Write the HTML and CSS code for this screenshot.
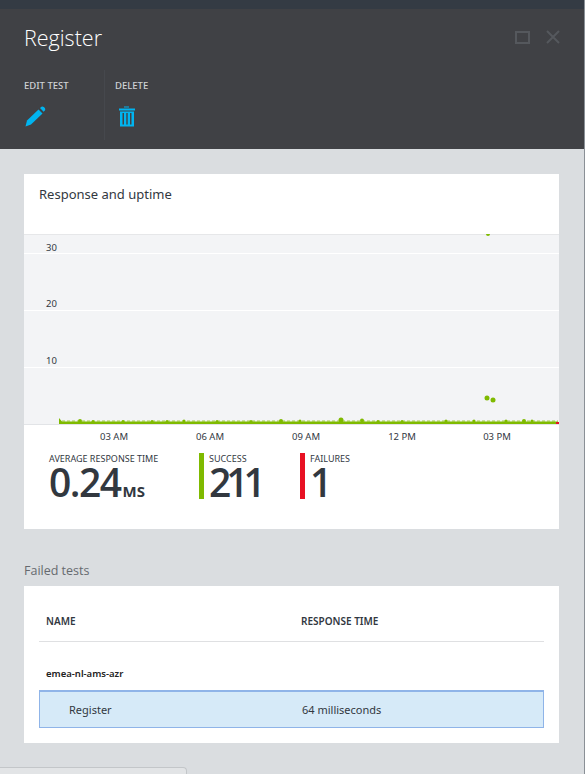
FILE: index.html
```html
<!DOCTYPE html>
<html lang="en">
<head>
<meta charset="UTF-8" />
<title>Register</title>
<link rel="stylesheet" href="styles.css">
</head>
<body>
<div class="topbar"></div>

<header class="blade-head">
  <div class="title-row">
    <h1>Register</h1>
    <div class="win-btns">
      <svg width="15" height="13" viewBox="0 0 15 13"><rect x="1" y="1" width="13" height="11" fill="none" stroke="#55585d" stroke-width="2"/></svg>
      <svg width="14" height="14" viewBox="0 0 14 14"><path d="M1 1L13 13M13 1L1 13" fill="none" stroke="#55585d" stroke-width="2"/></svg>
    </div>
  </div>
  <div class="commands">
    <div class="command cmd-edit">
      <span class="cmd-label">EDIT TEST</span>
      <svg width="22" height="21" viewBox="0 0 22 21">
        <path d="M1.500 20.500L3 14.500L14.500 3.500L18.500 7.500L7 18.500Z" fill="#00b4f0"/>
        <path d="M16 2L17.500 0.800Q18.600 0 19.800 1L20.800 2Q21.800 3.200 20.800 4.400L19.600 5.800Z" fill="#00b4f0"/>
      </svg>
    </div>
    <div class="command cmd-delete">
      <span class="cmd-label">DELETE</span>
      <svg width="16" height="21" viewBox="0 0 16 21">
        <path d="M5 0.500H10V1.500H5ZM0 2.500H16V4.500H0Z" fill="#00b4f0"/>
        <path d="M1 5.500H15V20.500H1ZM3.500 7V18.500H5V7ZM7.300 7V18.500H8.700V7ZM11 7V18.500H12.500V7Z" fill="#00b4f0" fill-rule="evenodd"/>
      </svg>
    </div>
  </div>
</header>

<main class="content">
  <section class="card chart-card">
    <h2>Response and uptime</h2>
    <svg class="chart" width="535" height="214" viewBox="0 0 535 214">
      <rect x="0" y="0" width="535" height="190" fill="#f3f4f6"/>
      <rect x="0" y="0" width="535" height="1" fill="#e6e7e9"/>
      <rect x="0" y="19" width="535" height="1" fill="#fff"/>
      <rect x="0" y="76" width="535" height="1" fill="#fff"/>
      <rect x="0" y="133" width="535" height="1" fill="#fff"/>
      <rect x="0" y="190" width="535" height="1" fill="#e2e4e7"/>
      <text class="tick" x="22" y="17">30</text>
      <text class="tick" x="22" y="73">20</text>
      <text class="tick" x="22" y="130">10</text>
      <path d="M35 190V184L38 187.500L534 187.500V190Z" fill="#7fba00"/>
      <path d="M38 187H534" stroke="#7fba00" stroke-width="1" stroke-dasharray="3 2" stroke-opacity="0.7" fill="none"/>
      <g fill="#7fba00">
        <circle cx="56" cy="187" r="2"/>
        <circle cx="69" cy="187.500" r="1.500"/>
        <circle cx="99" cy="187.500" r="1.500"/>
        <circle cx="128" cy="187.500" r="1.500"/>
        <circle cx="143" cy="187.500" r="1.500"/>
        <circle cx="160" cy="187" r="1.500"/>
        <circle cx="193" cy="187.500" r="1.500"/>
        <circle cx="227" cy="187.500" r="1.500"/>
        <circle cx="257" cy="187" r="2"/>
        <circle cx="276" cy="187" r="1.500"/>
        <circle cx="317" cy="186" r="2.500"/>
        <circle cx="338" cy="186.500" r="2"/>
        <circle cx="354" cy="187.500" r="1.500"/>
        <circle cx="378" cy="187.500" r="1.500"/>
        <circle cx="422" cy="187" r="1.500"/>
        <circle cx="450" cy="187" r="1.500"/>
        <circle cx="482" cy="187" r="1.500"/>
        <circle cx="500" cy="187" r="2"/>
        <circle cx="508" cy="187" r="1.500"/>
        <circle cx="463" cy="164" r="2.500"/>
        <circle cx="469" cy="166" r="2.500"/>
        <circle cx="464" cy="0" r="2"/>
      </g>
      <rect x="532" y="188" width="3" height="2" fill="#e81123"/>
      <text class="tick-x" x="90" y="206">03 AM</text>
      <text class="tick-x" x="186" y="206">06 AM</text>
      <text class="tick-x" x="282" y="206">09 AM</text>
      <text class="tick-x" x="378" y="206">12 PM</text>
      <text class="tick-x" x="473" y="206">03 PM</text>
    </svg>
    <div class="stats">
      <div class="stat stat-avg">
        <span class="stat-label">AVERAGE RESPONSE TIME</span>
        <span class="stat-value">0.24<small>MS</small></span>
      </div>
      <div class="stat stat-ok">
        <span class="stat-label">SUCCESS</span>
        <span class="stat-value stat-tight">211</span>
      </div>
      <div class="stat stat-fail">
        <span class="stat-label">FAILURES</span>
        <span class="stat-value">1</span>
      </div>
    </div>
  </section>

  <h3 class="section-title">Failed tests</h3>

  <section class="card table-card">
    <div class="tbl-head">
      <span>NAME</span>
      <span>RESPONSE TIME</span>
    </div>
    <div class="tbl-group">emea-nl-ams-azr</div>
    <div class="tbl-row">
      <span class="row-name">Register</span>
      <span>64 milliseconds</span>
    </div>
  </section>
</main>

<div class="bottom-tab"></div>
</body>
</html>
```

FILE: styles.css
```css
html, body { margin: 0; height: 774px; overflow: hidden; }
body {
  font-family: "Noto Sans", "Open Sans", sans-serif;
  background: #dadde0;
  color: #32383f;
  border-right: 1px solid #8a9096;
  box-sizing: border-box;
}

.topbar { height: 9px; background: #343b44; }

.blade-head { height: 140px; background: #404145; padding: 0 24px; box-sizing: border-box; }
.title-row { display: flex; justify-content: space-between; align-items: flex-start; height: 61px; }
.title-row h1 { margin: 13px 0 0; font-size: 21.5px; line-height: 32px; font-weight: 300; color: #fff; font-family: "Open Sans", sans-serif; }
.win-btns { display: flex; gap: 16px; align-items: center; margin-top: 21px; }

.commands { display: flex; }
.command { display: flex; flex-direction: column; align-items: flex-start; gap: 14px; padding-top: 10px; height: 60px; box-sizing: content-box; }
.command svg { display: block; }
.cmd-edit { width: 80px; margin-right: 10px; border-right: 1px solid #46484d; }
.cmd-delete svg { margin-left: 4px; }
.cmd-label { font-size: 9.5px; line-height: 12px; color: #cfd2d6; font-weight: 500; }

.content { padding: 25px 25px 0 24px; }
.card { background: #fff; }

.chart-card { height: 355px; box-sizing: border-box; }
.chart-card h2 { margin: 0; padding: 11px 15px 0; height: 60px; box-sizing: border-box; font-size: 13px; line-height: 18px; font-weight: 400; }
.chart { display: block; }
.tick, .tick-x { font-family: "Noto Sans", sans-serif; fill: #32383f; }
.tick { font-size: 9.5px; }
.tick-x { font-size: 9.5px; text-anchor: middle; }

.stats { display: flex; padding: 5px 0 0 25px; }
.stat { display: flex; flex-direction: column; height: 46px; }
.stat-label { display: block; font-size: 9px; line-height: 12px; }
.stat-value { display: block; font-size: 39px; line-height: 34px; font-weight: 600; letter-spacing: -1.5px; font-family: "Open Sans", sans-serif; }
.stat-value small { font-size: 15px; font-weight: 700; letter-spacing: 0; margin-left: 2px; }
.stat-tight { letter-spacing: -5px; }
.stat-avg { width: 150px; }
.stat-ok { width: 91px; border-left: 5px solid #7fba00; padding-left: 5px; }
.stat-fail { border-left: 5px solid #e81123; padding-left: 5px; }

.section-title { margin: 34px 0 7px; font-size: 12.5px; line-height: 16px; font-weight: 400; color: #666a6f; font-family: "Open Sans", sans-serif; }

.table-card { height: 157px; padding: 0 15px; box-sizing: border-box; }
.tbl-head { display: grid; grid-template-columns: 255px 1fr; height: 56px; padding: 28px 0 0 7px; box-sizing: border-box; border-bottom: 1px solid #dfe0e2; font-size: 10px; line-height: 14px; font-weight: 600; }
.tbl-group { height: 48px; padding: 25px 0 0 7px; box-sizing: border-box; font-size: 9.5px; line-height: 14px; font-weight: 600; color: #222; }
.tbl-row { display: grid; grid-template-columns: 262px 1fr; height: 38px; align-items: center; background: #d6eaf8; border: 1px solid #8fb4e8; border-top-width: 2px; box-sizing: border-box; font-size: 11px; }
.row-name { padding-left: 29px; }

.bottom-tab { width: 187px; height: 8px; margin-top: 24px; background: #e2e4e6; border: 1px solid #c3c6c9; border-left: 0; border-bottom: 0; border-top-right-radius: 4px; box-sizing: border-box; }
```
